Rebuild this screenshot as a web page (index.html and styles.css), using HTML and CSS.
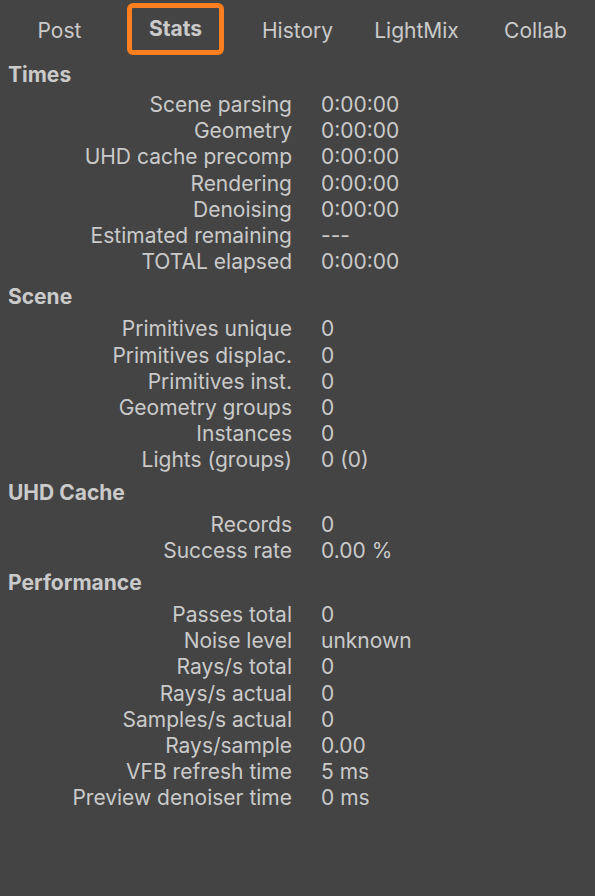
FILE: index.html
```html
<!DOCTYPE html>
<html>
<head>
<meta charset="utf-8">
<link rel="stylesheet" href="styles.css">
</head>
<body>
<div class="panel">
  <nav class="tabs">
    <div class="tab">Post</div>
    <div class="tab active"><span class="tab-box">Stats</span></div>
    <div class="tab">History</div>
    <div class="tab">LightMix</div>
    <div class="tab">Collab</div>
  </nav>
  <section class="group first">
    <h2 class="group-title">Times</h2>
    <div class="rows">
      <div class="label">Scene parsing</div><div class="value">0:00:00</div>
      <div class="label">Geometry</div><div class="value">0:00:00</div>
      <div class="label">UHD cache precomp</div><div class="value">0:00:00</div>
      <div class="label">Rendering</div><div class="value">0:00:00</div>
      <div class="label">Denoising</div><div class="value">0:00:00</div>
      <div class="label">Estimated remaining</div><div class="value">---</div>
      <div class="label">TOTAL elapsed</div><div class="value">0:00:00</div>
    </div>
  </section>
  <section class="group wide">
    <h2 class="group-title">Scene</h2>
    <div class="rows">
      <div class="label">Primitives unique</div><div class="value">0</div>
      <div class="label">Primitives displac.</div><div class="value">0</div>
      <div class="label">Primitives inst.</div><div class="value">0</div>
      <div class="label">Geometry groups</div><div class="value">0</div>
      <div class="label">Instances</div><div class="value">0</div>
      <div class="label">Lights (groups)</div><div class="value">0 (0)</div>
    </div>
  </section>
  <section class="group">
    <h2 class="group-title">UHD Cache</h2>
    <div class="rows">
      <div class="label">Records</div><div class="value">0</div>
      <div class="label">Success rate</div><div class="value">0.00 %</div>
    </div>
  </section>
  <section class="group">
    <h2 class="group-title">Performance</h2>
    <div class="rows">
      <div class="label">Passes total</div><div class="value">0</div>
      <div class="label">Noise level</div><div class="value">unknown</div>
      <div class="label">Rays/s total</div><div class="value">0</div>
      <div class="label">Rays/s actual</div><div class="value">0</div>
      <div class="label">Samples/s actual</div><div class="value">0</div>
      <div class="label">Rays/sample</div><div class="value">0.00</div>
      <div class="label">VFB refresh time</div><div class="value">5 ms</div>
      <div class="label">Preview denoiser time</div><div class="value">0 ms</div>
    </div>
  </section>
</div>
</body>
</html>
```
FILE: styles.css
```css
html, body {
  margin: 0;
  padding: 0;
  background: #444444;
}
body {
  font-family: Inter, "Noto Sans", sans-serif;
  color: #cacaca;
  width: 595px;
  height: 896px;
  overflow: hidden;
}
.panel {
  display: flex;
  flex-direction: column;
}
.tabs {
  display: grid;
  grid-template-columns: repeat(5, 1fr);
  height: 62px;
  font-size: 21px;
}
.tab {
  display: flex;
  justify-content: center;
  align-items: flex-start;
  height: 62px;
  padding-top: 18px;
  box-sizing: border-box;
  line-height: 26px;
}
.tab.active {
  padding-top: 0;
}
.tab-box {
  display: flex;
  align-items: center;
  justify-content: center;
  width: 97px;
  height: 52px;
  box-sizing: border-box;
  border: 5px solid #fb7f1f;
  border-radius: 6px;
  font-weight: 700;
  padding-bottom: 1px;
  margin-top: 3px;
  margin-left: -6px;
}
.group {
  padding-top: 6px;
}
.group.first {
  padding-top: 0;
}
.group.wide {
  padding-top: 9px;
}
.group-title {
  margin: 0;
  padding-left: 8px;
  font-size: 21px;
  font-weight: 700;
  line-height: 26px;
  padding-bottom: 6px;
}
.group.first .group-title {
  padding-bottom: 4px;
}
.rows {
  display: grid;
  grid-template-columns: 292px 1fr;
  column-gap: 29px;
  font-size: 21px;
  line-height: 26.2px;
}
.label {
  text-align: right;
  white-space: nowrap;
}
.value {
  white-space: nowrap;
}
```
